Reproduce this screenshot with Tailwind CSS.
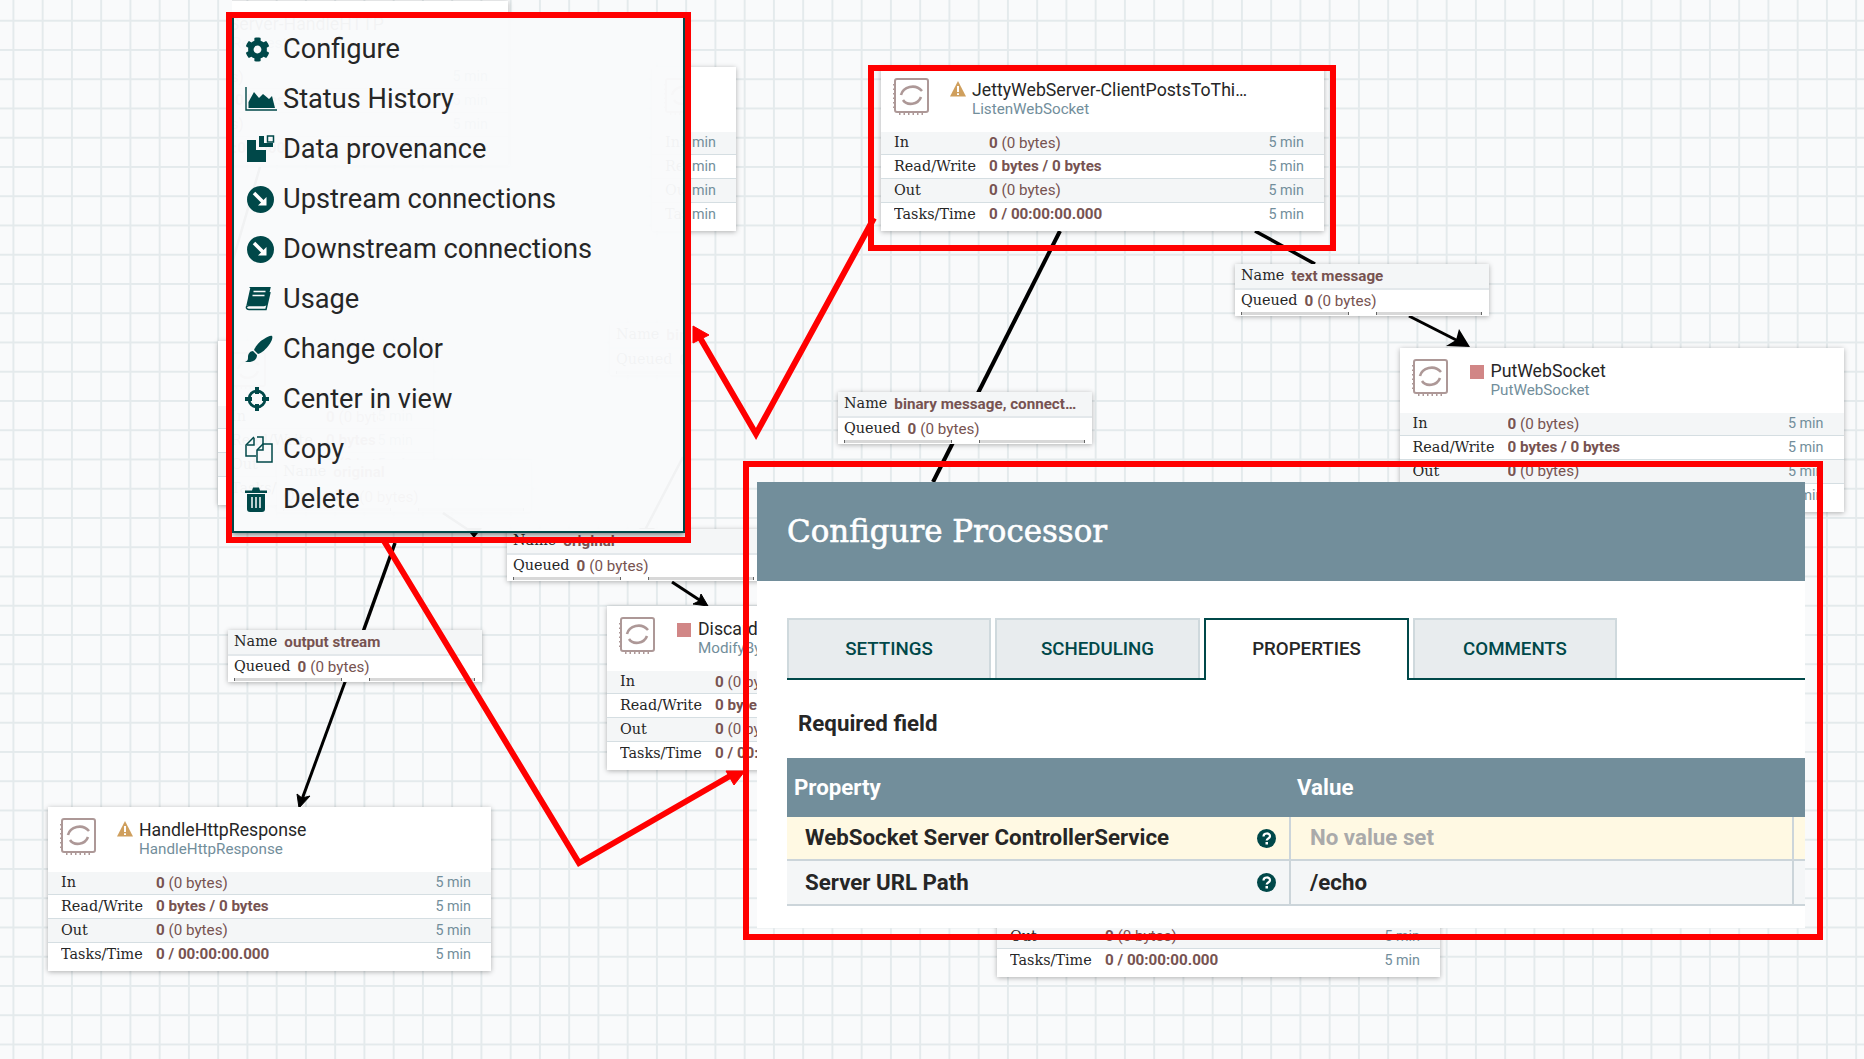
<!DOCTYPE html>
<html lang="en">
<head>
  <meta charset="UTF-8" />
  <title>Configure Processor</title>
  <script src="https://cdn.jsdelivr.net/npm/@tailwindcss/browser@4"></script>
</head>
<body class="bg-[#f9fafb]">
<div id="canvas" class="relative w-[1864px] h-[1059px] overflow-hidden font-['Roboto',sans-serif] bg-[#f9fafb] bg-[linear-gradient(to_right,#e4eaec_2px,transparent_2px),linear-gradient(to_bottom,#e4eaec_2px,transparent_2px)] bg-[size:29.25px_29.25px] bg-[position:12.45px_19.75px]">

  <!-- connections -->
  <svg class="absolute inset-0" width="1864" height="1059" fill="none" stroke="#000" stroke-width="3">
    <path d="M1060 231L933 482" stroke-width="4" />
    <path d="M1255 231L1315 264" stroke-width="3.500" />
    <path d="M1409 316L1466 345" />
    <path d="M1470 347L1446 346L1456 340L1459 329Z" fill="#000" stroke="none" />
    <path d="M395 543L345 682" stroke-width="3.500" />
    <path d="M345 682L301 802" />
    <path d="M299 808L297 794L302 798L310 796Z" fill="#000" stroke="#000" stroke-width="1" />
    <path d="M672 582L704 603" />
    <path d="M708 606L693 604L699 601L701 594Z" fill="#000" stroke="#000" stroke-width="1" />
    <path d="M466 528L482 528L474 538Z" fill="#000" stroke="none" />
    <path d="M639 528L655 528L647 538Z" fill="#000" stroke="none" />
    <path d="M332 438L367 461M443 513L473 533M683 457L645 530M260 167L233 260" stroke-width="2.500" />
  </svg>

  <div id="nodes"></div>

  <!-- what lies behind the menu shows through it only, so it is clipped to the menu -->
  <div id="behindMenu" class="absolute left-[232px] top-0 w-[453px] h-[533px] overflow-hidden"></div>

  <!-- context menu -->
  <div class="absolute left-[232px] top-[18px] w-[453px] h-[515px] bg-[#f9fafb]/[.97] border-x-2 border-b-2 border-[#004849] shadow-[0_2px_6px_rgba(0,0,0,.5)] pt-[6px] pl-[11px] text-[#262626] text-[27.200px]">
    <div class="flex items-center h-[50px]">
      <svg class="w-[25px] h-[25px] mr-[13px]" viewBox="0 0 512 512" fill="#004849"><path d="M487.4 315.7l-42.6-24.6c4.3-23.2 4.3-47 0-70.2l42.6-24.6c4.9-2.8 7.1-8.6 5.5-14-11.1-35.6-30-67.8-54.7-94.6-3.8-4.1-10-5.1-14.8-2.3L380.8 110c-17.9-15.4-38.5-27.3-60.8-35.1V25.8c0-5.6-3.9-10.5-9.4-11.7-36.7-8.2-74.3-7.8-109.2 0-5.5 1.2-9.4 6.1-9.4 11.7V75c-22.2 7.9-42.8 19.8-60.8 35.1L88.7 85.5c-4.9-2.8-11-1.9-14.8 2.3-24.7 26.7-43.6 58.9-54.7 94.6-1.7 5.4.6 11.2 5.5 14L67.3 221c-4.3 23.2-4.3 47 0 70.2l-42.6 24.6c-4.9 2.8-7.1 8.6-5.5 14 11.1 35.6 30 67.8 54.7 94.6 3.8 4.1 10 5.1 14.8 2.3l42.6-24.6c17.9 15.4 38.5 27.3 60.8 35.1v49.2c0 5.6 3.9 10.5 9.4 11.7 36.7 8.2 74.3 7.8 109.2 0 5.5-1.2 9.4-6.1 9.4-11.7v-49.2c22.2-7.9 42.8-19.8 60.8-35.1l42.6 24.6c4.9 2.8 11 1.9 14.8-2.3 24.7-26.7 43.6-58.9 54.7-94.6 1.5-5.5-.7-11.3-5.6-14.1zM256 336c-44.1 0-80-35.9-80-80s35.9-80 80-80 80 35.9 80 80-35.9 80-80 80z"/></svg>
      <span>Configure</span>
    </div>
    <div class="flex items-center h-[50px]">
      <svg class="w-[32px] h-[24px] mr-[6px]" viewBox="0 0 32 24" fill="#004849"><path d="M1 0v23h31" fill="none" stroke="#004849" stroke-width="1.400"/><path d="M3.500 21V15L9 5L14 11L18 7L24 12L27 9L30 21Z"/></svg>
      <span>Status History</span>
    </div>
    <div class="flex items-center h-[50px]">
      <svg class="w-[28px] h-[28px] mr-[8px] ml-[2px]" viewBox="0 0 28 28" fill="#004849"><path d="M0 5H9V15H19V27H0Z"/><path d="M12 1H17V8H26V12H12Z"/><rect x="20.500" y="1" width="6" height="6" fill="none" stroke="#004849" stroke-width="1.500"/></svg>
      <span>Data provenance</span>
    </div>
    <div class="flex items-center h-[50px]">
      <svg class="w-[27px] h-[27px] mr-[9px] ml-[2px]" viewBox="0 0 27 27"><circle cx="13.500" cy="13.500" r="13.500" fill="#004849"/><path d="M7 7L16 16" stroke="#fff" stroke-width="3.500"/><path d="M19.500 11V19.500H11Z" fill="#fff"/></svg>
      <span>Upstream connections</span>
    </div>
    <div class="flex items-center h-[50px]">
      <svg class="w-[27px] h-[27px] mr-[9px] ml-[2px]" viewBox="0 0 27 27"><circle cx="13.500" cy="13.500" r="13.500" fill="#004849"/><path d="M7 7L16 16" stroke="#fff" stroke-width="3.500"/><path d="M19.500 11V19.500H11Z" fill="#fff"/></svg>
      <span>Downstream connections</span>
    </div>
    <div class="flex items-center h-[50px]">
      <svg class="w-[26px] h-[24px] mr-[12px]" viewBox="0 0 26 24"><path d="M5 1Q5.500 0 7 0H25L21 17Q20.500 18.500 19 18.500H4Q1 19 1.500 21Q2 22.500 4 22.500H21L25 5" fill="none" stroke="#004849" stroke-width="1.500"/><path d="M5.500 0H25L21 18H3Q1.500 18 1 20Z" fill="#004849"/><path d="M8.500 4.500H20.500M7.500 8.500H19.500" stroke="#f9fafb" stroke-width="1.600"/></svg>
      <span>Usage</span>
    </div>
    <div class="flex items-center h-[50px]">
      <svg class="w-[28px] h-[28px] mr-[10px]" viewBox="0 0 28 28" fill="#004849"><path d="M27 1C28 2 27 6 24 10C21 14 17 18 13 19L9 15C11 10 15 6 19 4C22 2 26 0 27 1Z"/><path d="M8 16L12 20C12 25 8 27.500 0 27C3 26 3 24 3 22C3 19 5 16 8 16Z"/></svg>
      <span>Change color</span>
    </div>
    <div class="flex items-center h-[50px]">
      <svg class="w-[24px] h-[24px] mr-[14px]" viewBox="0 0 24 24" fill="#004849"><circle cx="12" cy="12" r="8" fill="none" stroke="#004849" stroke-width="2.800"/><path d="M10 0H14V7H10ZM10 17H14V24H10ZM0 10H7V14H0ZM17 10H24V14H17Z"/></svg>
      <span>Center in view</span>
    </div>
    <div class="flex items-center h-[50px]">
      <svg class="w-[28px] h-[27px] mr-[10px]" viewBox="0 0 28 27" fill="none" stroke="#004849" stroke-width="1.500"><path d="M12 1H18V8M9 1L1 9V20H11"/><path d="M9 2V9H2"/><path d="M18 8H27V26H12V14Z"/><path d="M18 8V14H12"/></svg>
      <span>Copy</span>
    </div>
    <div class="flex items-center h-[50px]">
      <svg class="w-[22px] h-[25px] mr-[16px]" viewBox="0 0 22 25" fill="#004849"><path d="M0 3.500H7L8 .500H14L15 3.500H22V6H0Z"/><path d="M2 7H20V22C20 24 19 25 17 25H5C3 25 2 24 2 22Z"/><path d="M7 10V21M11 10V21M15 10V21" stroke="#f9fafb" stroke-width="1.500"/></svg>
      <span>Delete</span>
    </div>
  </div>

  <!-- dialog -->
  <div class="absolute left-[757px] top-[482px] w-[1048px] h-[446px] bg-white">
    <div class="h-[99px] bg-[#728e9b] flex items-center pl-[30px]">
      <h1 class="font-['DejaVu_Serif',serif] text-[30.900px] text-white [-webkit-text-stroke:0.6px_#fff]">Configure Processor</h1>
    </div>
    <div class="ml-[30px] mt-[37px] h-[62px] flex gap-[4px] border-b-2 border-[#004849] text-[18.700px] font-medium">
      <div class="w-[204px] h-[60px] flex items-center justify-center bg-[#e8ecee] border-2 border-b-0 border-[#cfd9dd] text-[#004849]">SETTINGS</div>
      <div class="w-[205px] h-[60px] flex items-center justify-center bg-[#e8ecee] border-2 border-b-0 border-[#cfd9dd] text-[#004849]">SCHEDULING</div>
      <div class="w-[205px] h-[62px] pb-[2px] flex items-center justify-center bg-white border-2 border-b-0 border-[#004849] text-[#262626]">PROPERTIES</div>
      <div class="w-[204px] h-[60px] flex items-center justify-center bg-[#e8ecee] border-2 border-b-0 border-[#cfd9dd] text-[#004849]">COMMENTS</div>
    </div>
    <div class="ml-[41px] mt-[29px] h-[30px] flex items-center text-[22.300px] font-bold text-[#262626]">Required field</div>
    <div class="ml-[30px] mt-[19px]">
      <div class="h-[59px] flex items-center bg-[#728e9b] text-white text-[22.300px] font-bold">
        <div class="w-[510px] pl-[7px]">Property</div>
        <div>Value</div>
      </div>
      <div class="h-[44px] flex bg-[#fff9e3] border-b-2 border-[#ccd5da] text-[22.300px] font-bold text-[#262626]">
        <div class="w-[504px] shrink-0 flex items-center justify-between pl-[18px] pr-[13px] border-r-2 border-[#ccd5da]">
          <span>WebSocket Server ControllerService</span>
          <svg class="w-[19px] h-[19px]" viewBox="0 0 19 19"><circle cx="9.500" cy="9.500" r="9.500" fill="#004849"/><path d="M6.500 7.500C6.500 3.500 13 3.500 13 7.300C13 9.500 9.700 9.500 9.700 11.500" fill="none" stroke="#fff" stroke-width="2.200"/><rect x="8.500" y="13" width="2.500" height="2.500" fill="#fff"/></svg>
        </div>
        <div class="w-[503px] flex items-center pl-[19px] border-r-2 border-[#ccd5da] text-[#aaaaaa]">No value set</div>
      </div>
      <div class="h-[45px] flex bg-[#f4f6f7] border-b-2 border-[#ccd5da] text-[22.300px] font-bold text-[#262626]">
        <div class="w-[504px] shrink-0 flex items-center justify-between pl-[18px] pr-[13px] border-r-2 border-[#ccd5da]">
          <span>Server URL Path</span>
          <svg class="w-[19px] h-[19px]" viewBox="0 0 19 19"><circle cx="9.500" cy="9.500" r="9.500" fill="#004849"/><path d="M6.500 7.500C6.500 3.500 13 3.500 13 7.300C13 9.500 9.700 9.500 9.700 11.500" fill="none" stroke="#fff" stroke-width="2.200"/><rect x="8.500" y="13" width="2.500" height="2.500" fill="#fff"/></svg>
        </div>
        <div class="w-[503px] flex items-center pl-[19px] border-r-2 border-[#ccd5da]">/echo</div>
      </div>
    </div>
  </div>

  <!-- callouts -->
  <div class="absolute left-[226px] top-[12px] w-[465px] h-[531px] border-[6px] border-[#ff0000]"></div>
  <div class="absolute left-[868px] top-[65px] w-[468px] h-[186px] border-[6px] border-[#ff0000]"></div>
  <div class="absolute left-[743px] top-[461px] w-[1080px] h-[479px] border-[6px] border-[#ff0000]"></div>
  <svg class="absolute inset-0" width="1864" height="1059" fill="none" stroke="#ff0000" stroke-width="6">
    <path d="M874 218L756 434L699 336" />
    <path d="M693 326L693 343L709 335Z" fill="#ff0000" stroke-width="1" />
    <path d="M384 541L579 863L730 776" />
    <path d="M745 771L726 771L734 785Z" fill="#ff0000" stroke-width="1" />
  </svg>
</div>

<script>
  const procIcon = `<svg class="absolute left-[12px] top-[11px] w-[37px] h-[38px]" viewBox="0 0 37 38" fill="none" stroke="#ad9897">
    <path d="M2 32V3Q2 1 4 1H33Q35 1 35 3V32Q35 34 33 34H4Q2 34 2 32Z" stroke-width="2" />
    <path d="M1 6V30M6 36H32" stroke-width="2" stroke-dasharray="1.500 3" />
    <path d="M8 17C10 9 22 5 29 13" stroke-width="2.600" />
    <path d="M28 19C25 27 14 28 10 22" stroke-width="2.600" />
  </svg>`;
  const warnIcon = `<svg class="absolute left-[69px] top-[14px] w-[16px] h-[16px]" viewBox="0 0 16 16"><path d="M8 0L16 15.500H0Z" fill="#cf9f5d" /><path d="M8 5V11M8 12.300V14" stroke="#fff" stroke-width="2" /></svg>`;
  const stopIcon = `<div class="absolute left-[70px] top-[17px] w-[14px] h-[14px] bg-[#d18686]"></div>`;

  function stat(label, value, rowClass) {
    return `<div class="${rowClass} flex items-center pl-[13px] pr-[20px] text-[14.300px] whitespace-nowrap">
      <span class="w-[95px] min-w-0 overflow-hidden font-['DejaVu_Serif',serif] text-[14.400px] text-[#262626]">${label}</span>
      <span class="flex-1 w-0 min-w-0 overflow-hidden text-[15.200px] text-[#775351]">${value}</span>
      <span class="shrink-0 text-[#728e9b]">5 min</span>
    </div>`;
  }

  function processor(n) {
    const count = '<b class="font-bold">0</b> (0 bytes)';
    return `<div class="absolute bg-white overflow-hidden shadow-[0_1px_5px_rgba(0,0,0,.3)]" style="left:${n.x}px;top:${n.y}px;width:${n.w}px">
      <div class="relative h-[65px]">
        ${n.bare ? '' : procIcon}
        ${n.warn ? warnIcon : n.stop ? stopIcon : ''}
        <div class="absolute left-[91px] top-[12px] w-[340px] h-[22px] leading-[22px] text-[17.700px] text-[#262626] whitespace-nowrap">${n.title}</div>
        <div class="absolute left-[91px] top-[32px] leading-[20px] text-[15.200px] text-[#728e9b] whitespace-nowrap">${n.sub}</div>
      </div>
      ${stat('In', count, 'h-[23px] bg-[#f4f6f7] border-b border-[#d5dee2]')}
      ${stat('Read/Write', '<b class="font-bold">0 bytes / 0 bytes</b>', 'h-6 bg-white border-b border-[#d5dee2]')}
      ${stat('Out', count, 'h-6 bg-[#f4f6f7] border-b border-[#d5dee2]')}
      ${stat('Tasks/Time', '<b class="font-bold">0 / 00:00:00.000</b>', 'h-[28px] pb-[5px] bg-white')}
    </div>`;
  }

  function connection(c) {
    return `<div class="absolute h-[52px] bg-white overflow-hidden shadow-[0_1px_5px_rgba(0,0,0,.3)] text-[15.200px] text-[#775351] whitespace-nowrap" style="left:${c.x}px;top:${c.y}px;width:${c.w}px">
      <div class="h-[26px] flex items-center pl-[6px] bg-[#f4f6f7] border-b-2 border-[#e3e8eb]">
        <span class="font-['DejaVu_Serif',serif] text-[14.400px] text-[#262626] mr-[7px]">Name</span><b class="font-bold">${c.name}</b>
      </div>
      <div class="h-[22px] flex items-center pl-[6px]">
        <span class="font-['DejaVu_Serif',serif] text-[14.400px] text-[#262626] mr-[7px]">Queued</span><b class="font-bold mr-[4px]">0</b> (0 bytes)
      </div>
      <div class="flex ml-[6px] gap-[27px]">
        <div class="w-[108px] h-[3px] bg-[#d8d8d8] border-x border-[#666666]"></div>
        <div class="w-[106px] h-[3px] bg-[#d8d8d8] border-x border-[#666666]"></div>
      </div>
    </div>`;
  }

  const nodes = [
    { x: 652, y: 67, w: 84, title: '', sub: '', bare: true },
    { x: 218, y: 341, w: 215, title: '', sub: '' },
    { x: 881, y: 67, w: 443, title: 'JettyWebServer-ClientPostsToThi…', sub: 'ListenWebSocket', warn: true },
    { x: 1399.500, y: 348, w: 444, title: 'PutWebSocket', sub: 'PutWebSocket', stop: true },
    { x: 607, y: 606, w: 444, title: 'DiscardResponse', sub: 'ModifyBytes', stop: true },
    { x: 48, y: 807, w: 443, title: 'HandleHttpResponse', sub: 'HandleHttpResponse', warn: true },
    { x: 997, y: 813, w: 443, title: '', sub: '' },
  ];
  const connections = [
    { x: 228, y: 630, w: 254, name: 'output stream' },
    { x: 507, y: 529, w: 254, name: 'original' },
    { x: 277, y: 460, w: 254, name: 'original' },
    { x: 838, y: 392, w: 254, name: 'binary message, connect…' },
    { x: 1235, y: 264, w: 254, name: 'text message' },
  ];
  document.getElementById('nodes').innerHTML =
    nodes.map(processor).join('') + connections.map(connection).join('');

  // offsets here are relative to the menu's box at x=232
  document.getElementById('behindMenu').innerHTML =
    processor({ x: -168, y: 1, w: 444, title: 'JettyWebServer-HandleHTTP', sub: 'HandleHttpRequest', warn: true }) +
    connection({ x: 378, y: 323, w: 254, name: 'binary message' }) +
    `<div class="absolute left-[420px] top-[67px]">${procIcon}</div>`;
</script>
</body>
</html>
